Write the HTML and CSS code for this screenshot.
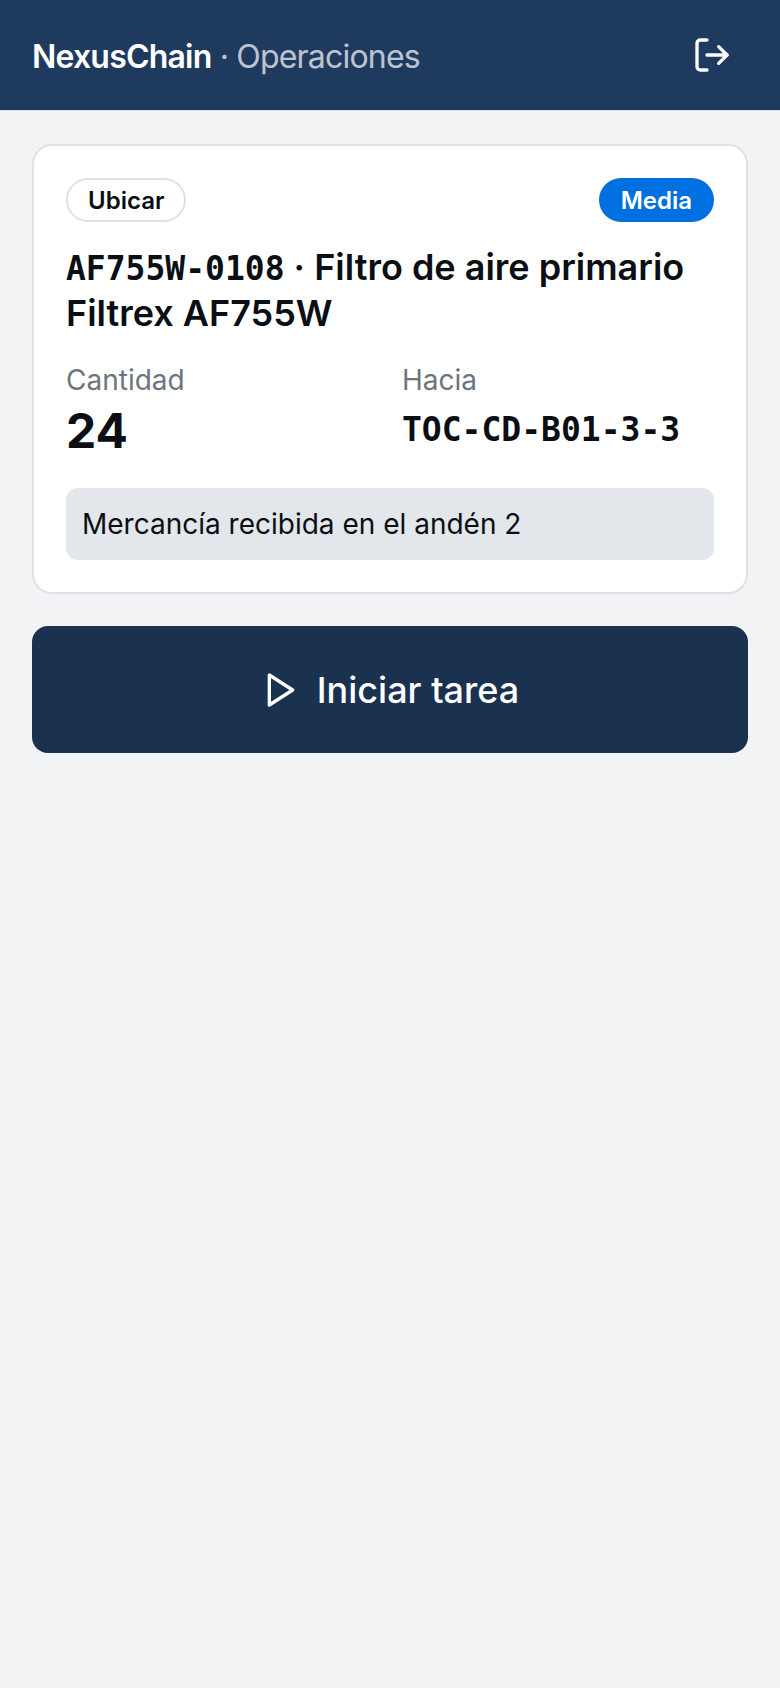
FILE: index.html
```html
<!DOCTYPE html>
<html>
<head>
    <title>NexusChain Operaciones</title>
    <link rel="stylesheet" href="styles.css">
</head>
<body>
    <header class="topbar">
        <div class="brand"><strong>NexusChain</strong> <span class="brand-sub">· Operaciones</span></div>
        <button class="icon-btn" aria-label="Salir">
            <svg width="40" height="40" viewBox="0 0 24 24" fill="none" stroke="#fff" stroke-width="2" stroke-linecap="round" stroke-linejoin="round">
                <path d="M9 3H5a2 2 0 0 0-2 2v14a2 2 0 0 0 2 2h4"/>
                <path d="M16 17l5-5-5-5"/>
                <path d="M21 12H9"/>
            </svg>
        </button>
    </header>

    <main class="content">
        <section class="card">
            <div class="card-top">
                <span class="badge badge-type">Ubicar</span>
                <span class="badge badge-prio">Media</span>
            </div>
            <h2 class="title"><span class="mono">AF755W-0108</span> · Filtro de aire primario Filtrex AF755W</h2>
            <div class="details">
                <div>
                    <div class="label">Cantidad</div>
                    <div class="qty">24</div>
                </div>
                <div>
                    <div class="label">Hacia</div>
                    <div class="location mono">TOC-CD-B01-3-3</div>
                </div>
            </div>
            <div class="note">Mercancía recibida en el andén 2</div>
        </section>

        <button class="start-btn">
            <svg width="40" height="40" viewBox="0 0 24 24" fill="none" stroke="#fff" stroke-width="2" stroke-linecap="round" stroke-linejoin="round">
                <polygon points="5 3 19 12 5 21 5 3"/>
            </svg>
            Iniciar tarea
        </button>
    </main>
</body>
</html>
```

FILE: styles.css
```css
* {
    box-sizing: border-box;
}
body {
    margin: 0;
    min-height: 1688px;
    background-color: #f1f3f5;
    font-family: Inter, "Liberation Sans", sans-serif;
    color: #0b0f14;
}
.topbar {
    height: 111px;
    padding: 0 32px;
    display: flex;
    align-items: center;
    justify-content: space-between;
    background-color: #1f3a5f;
    border-bottom: 1px solid #dee2e6;
}
.brand {
    font-size: 32px;
    color: #fff;
    letter-spacing: -0.8px;
    padding-top: 3px;
}
.brand strong {
    font-weight: 600;
}
.brand-sub {
    font-weight: 400;
    color: #fff;
    opacity: 0.7;
}
.icon-btn {
    padding: 16px;
    border: 0;
    background: none;
    display: flex;
}
.content {
    padding: 33px 32px;
    display: flex;
    flex-direction: column;
    gap: 32px;
}
.card {
    background-color: #fff;
    border: 2px solid #dee2e6;
    border-radius: 20px;
    padding: 32px;
}
.card-top {
    display: flex;
    justify-content: space-between;
    align-items: center;
}
.badge {
    height: 44px;
    padding: 0 20px;
    border-radius: 22px;
    display: flex;
    align-items: center;
    font-size: 24px;
    font-weight: 600;
}
.badge-type {
    border: 2px solid #dee2e6;
    background-color: #fff;
}
.badge-prio {
    padding: 0 22px;
    background-color: #0070e0;
    color: #fff;
}
.title {
    margin: 22px 0 23px;
    font-size: 36px;
    line-height: 46px;
    font-weight: 600;
}
.mono {
    font-family: "DejaVu Sans Mono", "Liberation Mono", monospace;
    font-weight: 700;
}
.title .mono {
    font-size: 33px;
    line-height: 1;
}
.details {
    display: grid;
    grid-template-columns: 1fr 1fr;
    gap: 24px;
}
.label {
    font-size: 28px;
    line-height: 43px;
    color: #6c757d;
}
.qty {
    font-size: 48px;
    font-weight: 700;
    line-height: 58px;
}
.location {
    font-size: 33px;
    line-height: 56px;
}
.note {
    margin-top: 28px;
    padding: 16px;
    background-color: #e3e6ea;
    border-radius: 12px;
    font-size: 28px;
    line-height: 40px;
}
.start-btn {
    height: 127px;
    border: 0;
    border-radius: 16px;
    background-color: #1a3150;
    color: #fff;
    font-family: inherit;
    font-size: 36px;
    font-weight: 500;
    display: flex;
    align-items: center;
    justify-content: center;
    gap: 16px;
}
```
